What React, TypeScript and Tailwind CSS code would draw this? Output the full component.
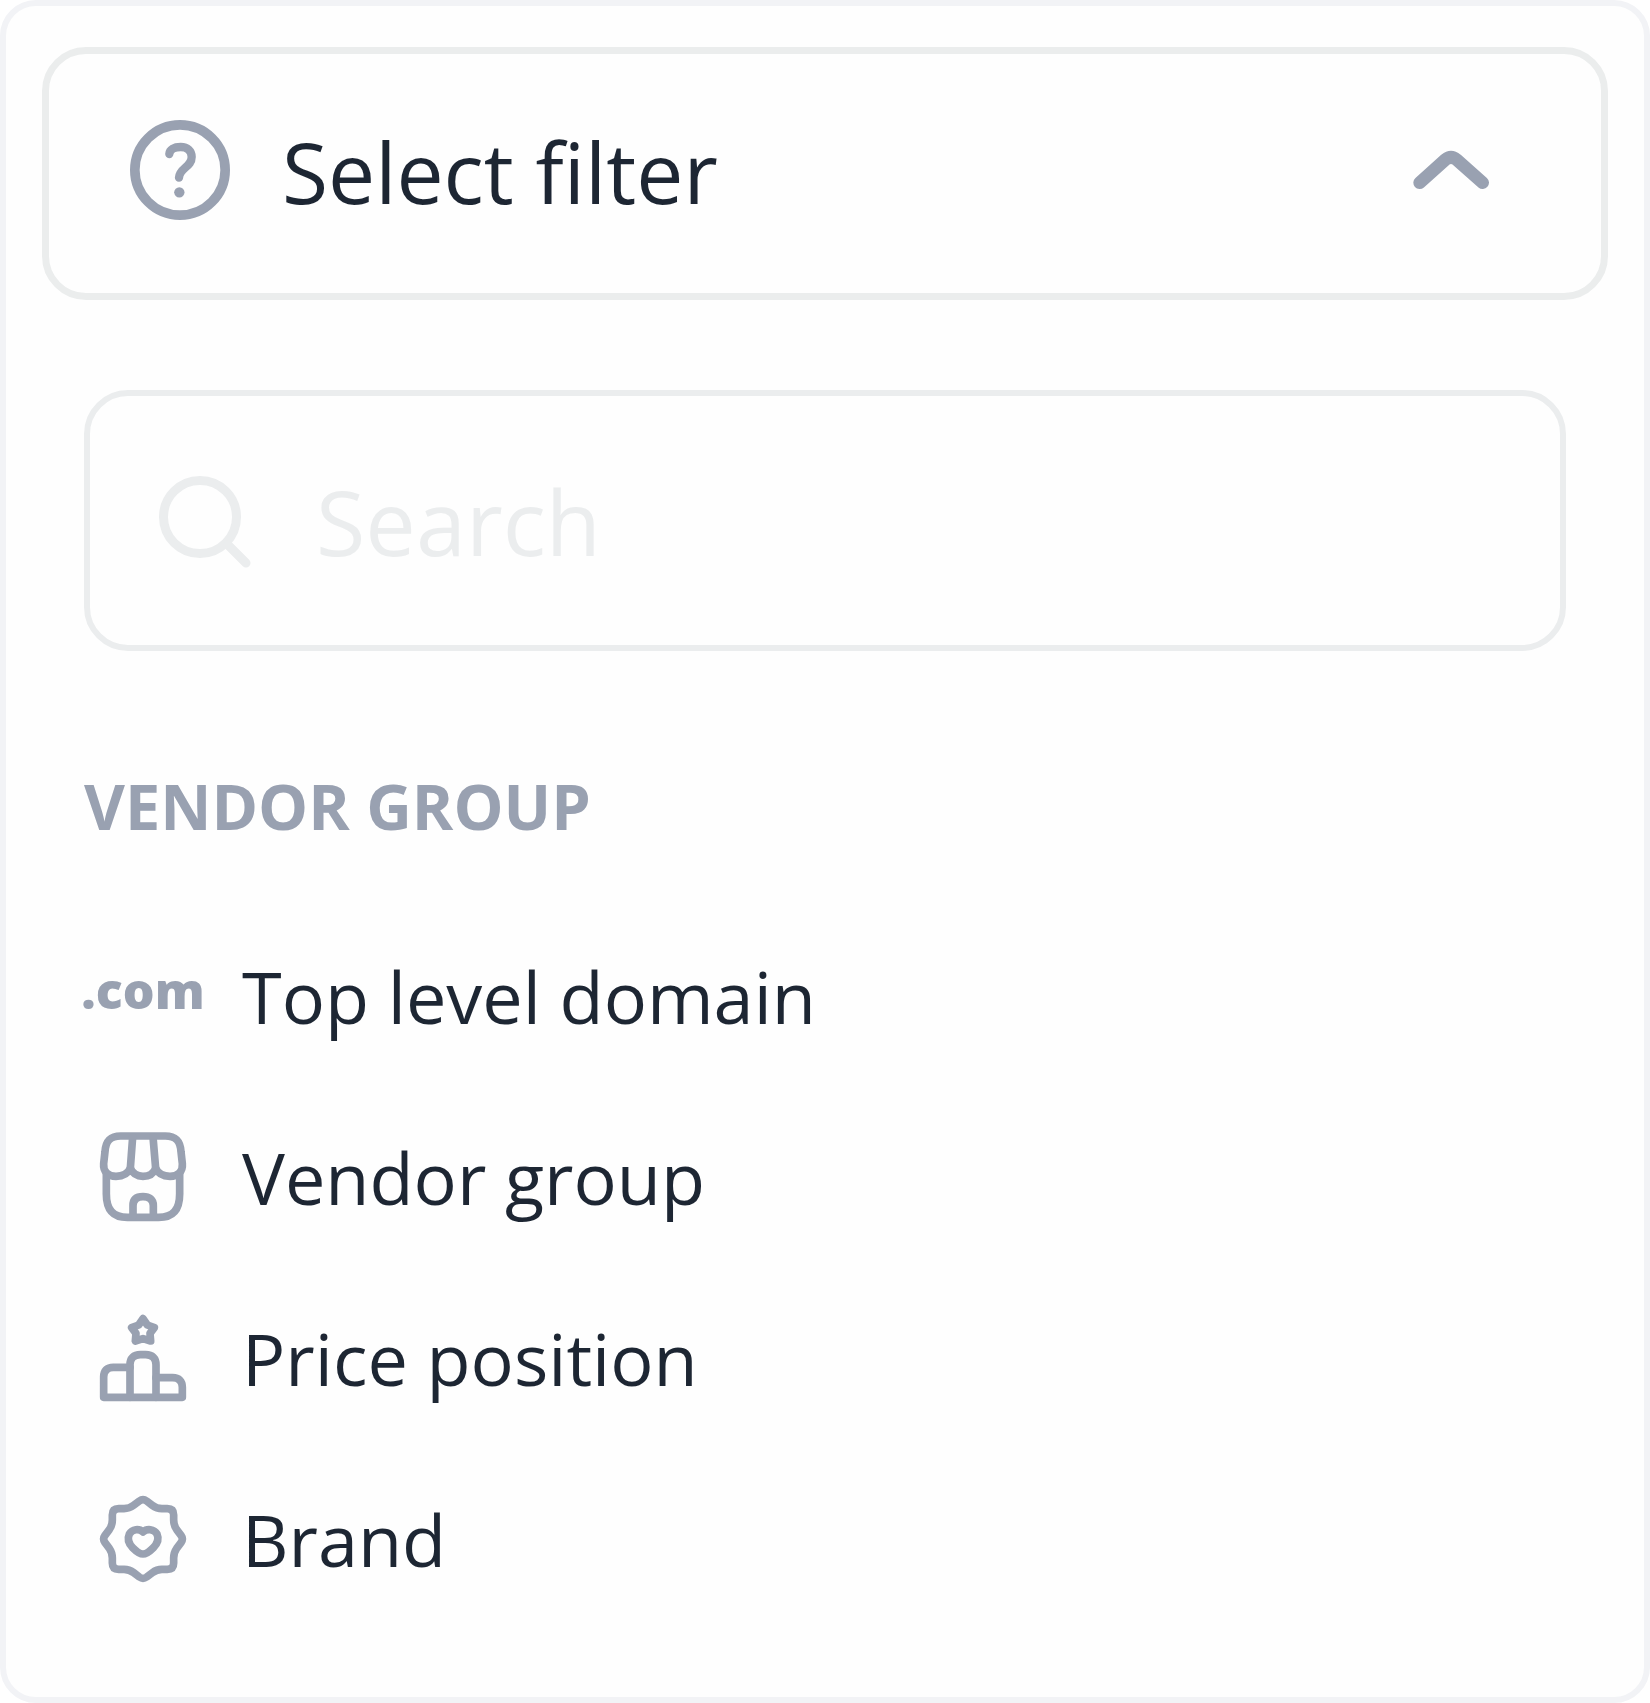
import { useState, type ReactNode } from "react";

function HelpIcon() {
  return (
    <svg className="size-[100px] shrink-0" viewBox="390 360 300 300" fill="none" stroke="currentColor" strokeLinecap="round" strokeLinejoin="round" aria-hidden="true">
      <circle cx="540" cy="510" r="135.5" strokeWidth="29" />
      <path d="M508 462C509 449 522 441 542 441C563 441 575 453 575 471C575 502 538 503 537 533" strokeWidth="25" />
      <circle cx="538" cy="577" r="15.5" fill="currentColor" stroke="none" />
    </svg>
  );
}

function ChevronIcon({ open }: { open: boolean }) {
  return (
    <svg className={open ? "h-[40px] w-[76px] shrink-0" : "h-[40px] w-[76px] shrink-0 rotate-180"} viewBox="190 360 228 120" fill="none" stroke="currentColor" strokeWidth="38" strokeLinecap="round" aria-hidden="true">
      <path d="M210 458L287 389Q304 375 321 389L399 458" />
    </svg>
  );
}

function SearchIcon() {
  return (
    <svg className="h-[94px] w-[92px] shrink-0" viewBox="158 474 92 94" fill="none" stroke="currentColor" strokeLinecap="round" aria-hidden="true">
      <circle cx="199" cy="517" r="36.5" strokeWidth="9" />
      <path d="M227 545L245 563" strokeWidth="9" />
    </svg>
  );
}

function RowIcon({ viewBox, children }: { viewBox: string; children: ReactNode }) {
  return (
    <svg className="size-[90px]" viewBox={viewBox} fill="none" stroke="currentColor" strokeWidth="23" strokeLinecap="round" strokeLinejoin="round" aria-hidden="true">
      {children}
    </svg>
  );
}

const storeIcon = (
  <RowIcon viewBox="54 65 270 270">
    <path d="M122 77H256C288 77 301 93 303 124L307 160C309 184 294 198 270 198C249 198 234 190 227 174C221 189 208 198 189 198C170 198 158 190 151 174C144 190 129 198 108 198C84 198 69 184 71 160L75 124C77 93 90 77 122 77Z" />
    <path d="M158 80L151 174M219 80L227 174" />
    <path d="M79 190V250C79 299 99 321 142 321H236C279 321 299 299 299 250V190" />
    <path d="M159 318V286C159 267 170 259 189 259C208 259 220 267 220 286V318" />
  </RowIcon>
);

const podiumIcon = (
  <RowIcon viewBox="54 39 270 270">
    <path d="M150 292V194C150 174 161 164 181 164H197C217 164 228 174 228 194V292" />
    <path d="M150 202H100C81 202 71 212 71 231V292H307V262C307 243 297 233 278 233H228" />
    <path d="M189 56L202 75L223 83L210 100L212 123L189 116L166 123L168 100L155 83L176 75Z" />
  </RowIcon>
);

const badgeIcon = (
  <RowIcon viewBox="54 42 270 270">
    <path d="M178 63Q189 55 200 63L217 76Q230 86 246 86H262Q281 86 281 105V120Q281 136 290 149L303 166Q311 177 303 188L290 205Q281 218 281 234V249Q281 268 262 268H246Q230 268 217 278L200 291Q189 299 178 291L161 278Q148 268 132 268H116Q97 268 97 249V234Q97 218 88 205L75 188Q67 177 75 166L88 149Q97 136 97 120V105Q97 86 116 86H132Q148 86 161 76Z" />
    <path d="M189 156C177 145 157 147 148 162C141 178 148 193 158 203C167 212 180 222 189 222C198 222 211 212 220 203C230 193 238 178 231 162C222 147 201 145 189 156Z" />
  </RowIcon>
);

const options: { label: string; icon: ReactNode }[] = [
  { label: "Top level domain", icon: <span className="pb-3 text-[50px] leading-[68px] font-extrabold">.com</span> },
  { label: "Vendor group", icon: storeIcon },
  { label: "Price position", icon: podiumIcon },
  { label: "Brand", icon: badgeIcon },
];

export default function App() {
  const [open, setOpen] = useState(true);
  return (
    <main className="rounded-[36px] border-6 border-[#f2f3f6] bg-[#fefefe] px-9 pt-[41px] pb-[68px] font-['Open_Sans',sans-serif] text-[#1d2633]">
      <button
        type="button"
        aria-expanded={open}
        onClick={() => setOpen(!open)}
        className="flex w-full items-center rounded-[44px] border-7 border-[#ebeded] pt-[60px] pr-[112px] pb-16 pl-[81px] text-left"
      >
        <span className="pb-1 text-[#99a1b1]"><HelpIcon /></span>
        <span className="ml-[52px] flex-1 text-[84px] leading-[115px]">Select filter</span>
        <span className="pb-1 text-[#99a1b1]"><ChevronIcon open={open} /></span>
      </button>

      {open && (
        <div className="px-[42px] pt-[90px]">
          <label className="flex items-center gap-[65px] rounded-[44px] border-6 border-[#ebedee] px-[69px] py-[62px] text-[#ebedee]">
            <SearchIcon />
            <input
              type="text"
              aria-label="Search"
              placeholder="Search"
              className="h-[125px] min-w-0 flex-1 bg-transparent pt-0.5 text-[90px] text-[#1d2633] outline-none placeholder:text-[#ebedee]"
            />
          </label>

          <h2 className="mt-[111px] text-[63px] leading-[87px] font-bold text-[#99a1b1]">VENDOR GROUP</h2>

          <ul className="mt-14">
            {options.map((option) => (
              <li key={option.label}>
                <button type="button" className="flex w-full items-center gap-10 py-10 text-left text-[72px] leading-[99px]">
                  <span className="flex w-[118px] shrink-0 items-center justify-center text-[#99a1b1]">{option.icon}</span>
                  <span className="pt-0.5">{option.label}</span>
                </button>
              </li>
            ))}
          </ul>
        </div>
      )}
    </main>
  );
}
